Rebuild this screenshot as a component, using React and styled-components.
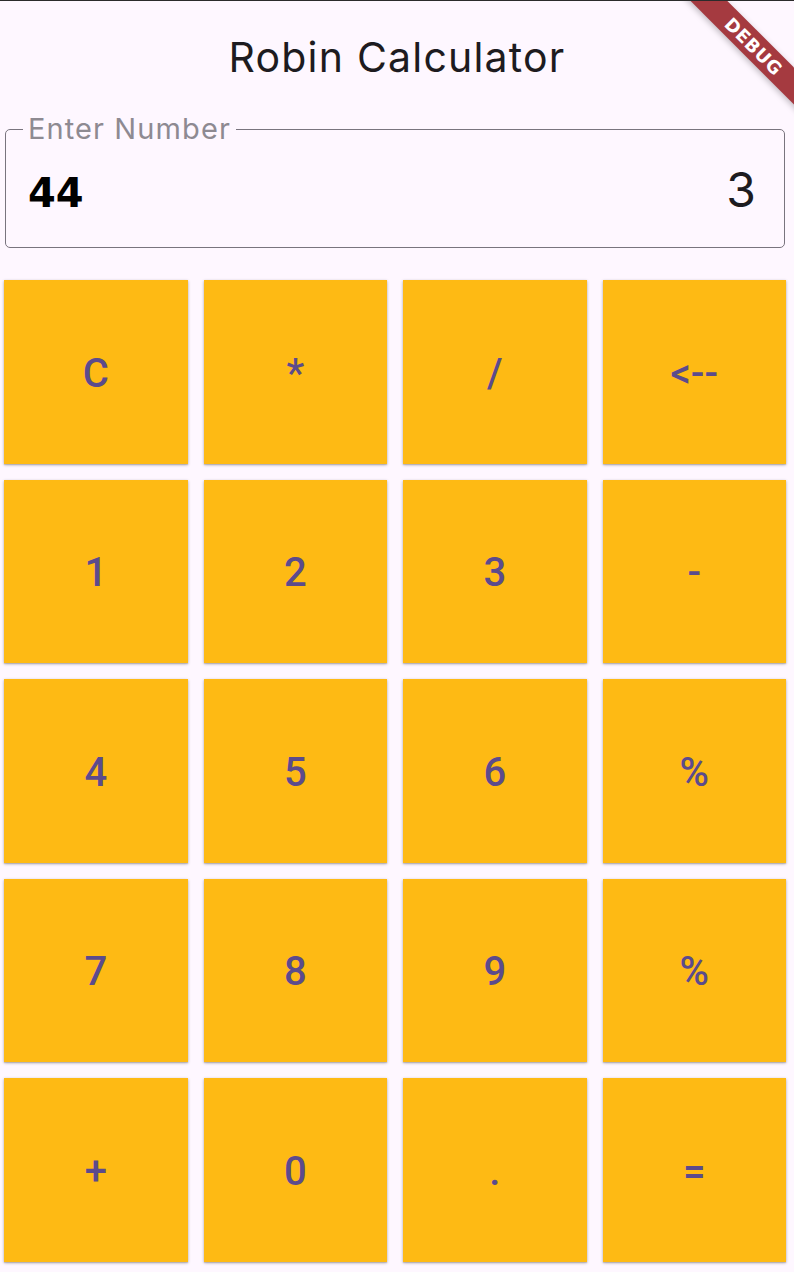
import React from 'react'
import styled, { createGlobalStyle } from 'styled-components'

const GlobalStyle = createGlobalStyle`
  html, body {
    margin: 0;
    padding: 0;
    background: #fef7ff;
  }
  * {
    box-sizing: border-box;
  }
`

const Page = styled.div`
  position: relative;
  width: 794px;
  min-height: 1272px;
  background: #fef7ff;
  border-top: 1px solid #2b2b2b;
  overflow: hidden;
  font-family: Inter, Roboto, "Noto Sans", sans-serif;
  font-feature-settings: "calt" 0, "liga" 0;
`

const AppBar = styled.header`
  height: 111px;
  display: flex;
  align-items: center;
  justify-content: center;
`

const Title = styled.h1`
  margin: 0;
  font-size: 41px;
  font-weight: 400;
  letter-spacing: 1.2px;
  color: #1d1b20;
`

const Field = styled.fieldset`
  margin: 2px 9px 0 5px;
  padding: 0 28px 0 22px;
  height: 134px;
  border: 1.5px solid #79747e;
  border-radius: 5px;
`

const Label = styled.legend`
  margin-left: -5px;
  padding: 0 5px;
  font-size: 29px;
  line-height: 30px;
  color: #8e8a92;
  letter-spacing: 1.1px;
`

const ValueRow = styled.div`
  display: flex;
  justify-content: space-between;
  align-items: baseline;
  height: 100px;
  padding-top: 16px;
`

const Typed = styled.span`
  font-family: "DejaVu Sans", sans-serif;
  font-weight: 700;
  font-size: 40px;
  color: #000;
`

const Result = styled.span`
  font-size: 48px;
  color: #1d1b20;
`

const Pad = styled.div`
  display: grid;
  grid-template-columns: repeat(4, 1fr);
  gap: 16px;
  margin-top: 32px;
  padding: 0 8px 0 4px;
`

const Key = styled.button`
  aspect-ratio: 1 / 1;
  border: 0;
  border-radius: 0;
  background: #feba14;
  color: #5c4b8c;
  font-family: Roboto, "Noto Sans", sans-serif;
  font-size: 40px;
  font-weight: 500;
  display: flex;
  align-items: center;
  justify-content: center;
  box-shadow: 0 1px 3px rgba(0, 0, 0, 0.28), 0 1px 1px rgba(0, 0, 0, 0.12);
  cursor: pointer;
  padding: 3px 0 0;
`

const BannerWrap = styled.div`
  position: absolute;
  top: 0;
  right: 0;
  width: 150px;
  height: 150px;
  overflow: hidden;
  pointer-events: none;
`

const Banner = styled.div`
  position: absolute;
  left: 10px;
  top: 32px;
  width: 200px;
  height: 26px;
  transform: rotate(45deg);
  background: #a53a40;
  box-shadow: 0 2px 6px rgba(0, 0, 0, 0.25);
  display: flex;
  align-items: center;
  justify-content: center;
  color: #fff;
  font-family: "DejaVu Sans", sans-serif;
  font-weight: 700;
  font-size: 18px;
  letter-spacing: 0.5px;
`

const keys = [
  'C', '*', '/', '<--',
  '1', '2', '3', '-',
  '4', '5', '6', '%',
  '7', '8', '9', '%',
  '+', '0', '.', '=',
]

export default function App() {
  return (
    <Page>
      <GlobalStyle />
      <AppBar>
        <Title>Robin Calculator</Title>
      </AppBar>
      <Field>
        <Label>Enter Number</Label>
        <ValueRow>
          <Typed>44</Typed>
          <Result>3</Result>
        </ValueRow>
      </Field>
      <Pad>
        {keys.map((k, i) => (
          <Key key={i}>{k}</Key>
        ))}
      </Pad>
      <BannerWrap>
        <Banner>DEBUG</Banner>
      </BannerWrap>
    </Page>
  )
}
